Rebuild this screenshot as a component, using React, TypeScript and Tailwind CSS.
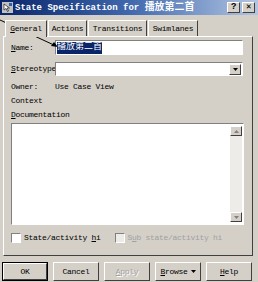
import React from "react";

const sunken =
  "border border-t-[#808080] border-l-[#808080] border-r-white border-b-white";
const raised =
  "border border-t-white border-l-white border-r-[#404040] border-b-[#404040]";

function Btn({ children, def, disabled }: { children: React.ReactNode; def?: boolean; disabled?: boolean }) {
  return (
    <div
      className={`w-[46px] h-[19px] flex items-center justify-center ${
        def ? "border border-black" : ""
      }`}
    >
      <div
        className={`w-full h-full flex items-center justify-center ${raised} ${
          disabled ? "text-[#a0a0a0] [text-shadow:1px_1px_0_#fff]" : "text-black"
        }`}
      >
        {children}
      </div>
    </div>
  );
}

function Tab({ label, w, active }: { label: React.ReactNode; w: number; active?: boolean }) {
  return (
    <div
      style={{ width: w }}
      className={`h-[16px] flex items-center justify-center border-t border-l border-r border-t-white border-l-white border-r-[#404040] ${
        active ? "h-[17px] -mb-px bg-[#d4d0c8] z-10" : ""
      }`}
    >
      {label}
    </div>
  );
}

export default function App() {
  return (
    <div className="relative w-[258px] h-[282px] overflow-hidden bg-[#d4d0c8] font-['Liberation_Mono','Noto_Sans_CJK_SC',monospace] text-[8px] tracking-[-0.3px] text-black leading-none">
      {/* Title bar */}
      <div className="h-[15px] flex items-center bg-gradient-to-r from-[#0a246a] via-[#4068ac] to-[#b4c6e2] pl-[2px] pr-[3px]">
        <svg width="11" height="11" viewBox="0 0 11 11">
          <rect x="0" y="0" width="11" height="11" fill="#c0c0c0" />
          <path d="M2 2 L2 8 L4 6.5 L5.5 9.5 L6.5 9 L5 6 L7.5 6 Z" fill="#fff" stroke="#000" strokeWidth="0.6" />
          <rect x="7" y="1" width="3" height="3" fill="#3060a0" />
        </svg>
        <span className="ml-[2px] text-white font-bold text-[9px] tracking-normal whitespace-nowrap">
          State Specification for <span className="text-[10px]">播放第二首</span>
        </span>
        <div className="flex-1" />
        <div className={`w-[13px] h-[11px] bg-[#d4d0c8] flex items-center justify-center font-bold text-[9px] ${raised}`}>?</div>
        <div className={`ml-[2px] w-[13px] h-[11px] bg-[#d4d0c8] flex items-center justify-center font-bold text-[9px] ${raised}`}>✕</div>
      </div>

      {/* Tabs */}
      <div className="mt-[5px] h-[16px] flex items-end pl-[5px] gap-[1px]">
        <Tab active w={42} label={<span><span className="underline">G</span>eneral</span>} />
        <Tab w={39} label="Actions" />
        <Tab w={59} label="Transitions" />
        <Tab w={50} label="Swimlanes" />
      </div>

      {/* Panel */}
      <div className={`ml-[3px] w-[250px] h-[220px] ${raised} flex flex-col pl-[7px]`}>
        <div className="mt-[3px] h-[15px] flex items-center">
          <span className="w-[44px]"><span className="underline">N</span>ame:</span>
          <div className={`w-[188px] h-[15px] bg-white ${sunken} flex items-center pl-[1px]`}>
            <span className="bg-[#0a246a] text-white text-[9px] tracking-normal h-[12px] flex items-center">播放第二首</span>
          </div>
        </div>
        <div className="mt-[7px] h-[14px] flex items-center">
          <span className="w-[44px] whitespace-nowrap"><span className="underline">S</span>tereotype</span>
          <div className={`w-[188px] h-[14px] bg-white ${sunken} flex justify-end items-center pr-[1px]`}>
            <div className={`w-[12px] h-[11px] bg-[#d4d0c8] ${raised} flex items-center justify-center`}>
              <svg width="5" height="3" viewBox="0 0 5 3"><path d="M0 0 H5 L2.5 3 Z" fill="#000" /></svg>
            </div>
          </div>
        </div>
        <div className="mt-[6px] h-[10px] flex items-center">
          <span className="w-[44px]">Owner:</span>
          <span>Use Case View</span>
        </div>
        <div className="mt-[4px] h-[10px] flex items-center">Context</div>
        <div className="mt-[4px] h-[10px] flex items-center">
          <span><span className="underline">D</span>ocumentation</span>
        </div>
        <div className={`mt-[3px] w-[233px] h-[102px] bg-white ${sunken} flex justify-end py-[2px] pr-[1px]`}>
          <div className="w-[12px] h-full bg-[#eeece8] flex flex-col justify-between">
            <div className={`h-[10px] bg-[#d4d0c8] ${raised} flex items-center justify-center`}>
              <svg width="5" height="3" viewBox="0 0 5 3"><path d="M0 3 H5 L2.5 0 Z" fill="#808080" /></svg>
            </div>
            <div className={`h-[10px] bg-[#d4d0c8] ${raised} flex items-center justify-center`}>
              <svg width="5" height="3" viewBox="0 0 5 3"><path d="M0 0 H5 L2.5 3 Z" fill="#808080" /></svg>
            </div>
          </div>
        </div>
        <div className="mt-[8px] h-[10px] flex items-center">
          <div className={`w-[10px] h-[10px] bg-white ${sunken}`} />
          <span className="ml-[3px]">State/activity <span className="underline">h</span>i</span>
          <div className={`ml-[14px] w-[10px] h-[10px] bg-[#ecebe8] ${sunken}`} />
          <span className="ml-[3px] text-[#a0a0a0]">S<span className="underline">u</span>b state/activity hi</span>
        </div>
      </div>

      {/* Buttons */}
      <div className="mt-[6px] pl-[2px] flex gap-[5px]">
        <Btn def>OK</Btn>
        <Btn>Cancel</Btn>
        <Btn disabled><span><span className="underline">A</span>pply</span></Btn>
        <Btn><span className="flex items-center gap-[3px]"><span><span className="underline">B</span>rowse</span><svg width="5" height="3" viewBox="0 0 5 3"><path d="M0 0 H5 L2.5 3 Z" fill="#000" /></svg></span></Btn>
        <Btn><span><span className="underline">H</span>elp</span></Btn>
      </div>

      {/* Arrow overlay */}
      <svg className="absolute left-0 top-0 pointer-events-none" width="258" height="282">
        <line x1="0" y1="20" x2="56" y2="46" stroke="#000" strokeWidth="1" />
        <path d="M58 47 L51 46 L54 42 Z" fill="#000" />
      </svg>
    </div>
  );
}
